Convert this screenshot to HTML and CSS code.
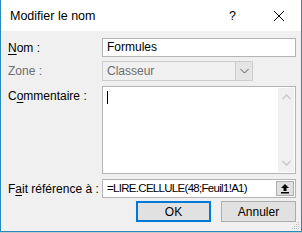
FILE: index.html
```html
<!DOCTYPE html>
<html lang="fr">
<head>
    <meta charset="UTF-8">
    <title>Modifier le nom</title>
    <link rel="stylesheet" href="styles.css">
</head>
<body>
    <div class="dialog">
        <div class="title-bar">
            <span class="title-text">Modifier le nom</span>
            <span class="title-help">?</span>
            <svg class="title-close" width="12" height="12" viewBox="0 0 12 12">
                <path d="M1 1 L11 11 M11 1 L1 11" stroke="#000" stroke-width="1" fill="none"/>
            </svg>
        </div>

        <div class="dialog-body">
            <div class="form-row row-name">
                <label class="form-label"><u>N</u>om :</label>
                <div class="text-field">Formules</div>
            </div>

            <div class="form-row row-zone">
                <label class="form-label disabled">Zone :</label>
                <div class="select-field">
                    <span class="select-value">Classeur</span>
                    <span class="select-button">
                        <svg width="9" height="6" viewBox="0 0 9 6">
                            <path d="M0.5 1 L4.5 5 L8.5 1" stroke="#555" stroke-width="1" fill="none"/>
                        </svg>
                    </span>
                </div>
            </div>

            <div class="form-row row-comment">
                <label class="form-label">C<u>o</u>mmentaire :</label>
                <div class="text-area">
                    <span class="caret"></span>
                    <div class="scrollbar">
                        <svg width="9" height="6" viewBox="0 0 9 6">
                            <path d="M0.5 5 L4.5 1 L8.5 5" stroke="#c8c8c8" stroke-width="1.5" fill="none"/>
                        </svg>
                        <svg width="9" height="6" viewBox="0 0 9 6">
                            <path d="M0.5 1 L4.5 5 L8.5 1" stroke="#c8c8c8" stroke-width="1.5" fill="none"/>
                        </svg>
                    </div>
                </div>
            </div>

            <div class="form-row row-ref">
                <label class="form-label">F<u>a</u>it référence à :</label>
                <div class="text-field ref-field">
                    <span class="ref-value">=LIRE.CELLULE(48;Feuil1!A1)</span>
                    <span class="collapse-button">
                        <svg width="10" height="11" viewBox="0 0 10 11">
                            <path d="M5 1 L9 5 L6.5 5 L6.5 8 L3.5 8 L3.5 5 L1 5 Z" fill="#000"/>
                            <rect x="1" y="9" width="8" height="1.5" fill="#000"/>
                        </svg>
                    </span>
                </div>
            </div>

            <div class="button-row">
                <button class="dialog-button default">OK</button>
                <button class="dialog-button">Annuler</button>
            </div>
        </div>

        <svg class="grip" width="8" height="8" viewBox="0 0 8 8">
            <rect x="6" y="0" width="1" height="1" fill="#b8b8b8"/>
            <rect x="4" y="2" width="1" height="1" fill="#b8b8b8"/>
            <rect x="6" y="2" width="1" height="1" fill="#b8b8b8"/>
            <rect x="2" y="4" width="1" height="1" fill="#b8b8b8"/>
            <rect x="4" y="4" width="1" height="1" fill="#b8b8b8"/>
            <rect x="6" y="4" width="1" height="1" fill="#b8b8b8"/>
            <rect x="0" y="6" width="1" height="1" fill="#b8b8b8"/>
            <rect x="2" y="6" width="1" height="1" fill="#b8b8b8"/>
            <rect x="4" y="6" width="1" height="1" fill="#b8b8b8"/>
            <rect x="6" y="6" width="1" height="1" fill="#b8b8b8"/>
        </svg>
    </div>
</body>
</html>
```

FILE: styles.css
```css
body, html {
    margin: 0;
    padding: 0;
    background: #c8c8c8;
    font-family: "Liberation Sans", Arial, sans-serif;
    font-size: 12px;
    color: #000;
}
.dialog {
    position: relative;
    width: 300px;
    height: 231px;
    background: #f0f0f0;
    border: 1px solid #2b88ba;
    border-top: none;
}
.title-bar {
    height: 31px;
    background: #fff;
    display: flex;
    align-items: center;
}
.title-text {
    margin-left: 9px;
    font-size: 12.5px;
    flex: 1;
}
.title-help {
    font-size: 12.5px;
    margin-right: 37px;
}
.title-close {
    margin-right: 16px;
}
.dialog-body {
    padding: 7px 0 0 7px;
}
.form-row {
    display: flex;
    align-items: flex-start;
}
.form-label {
    width: 94px;
    flex: none;
    line-height: 16px;
    padding-top: 2px;
}
.form-label u {
    text-decoration-thickness: 1px;
    text-underline-offset: 2px;
}
.form-label.disabled {
    color: #6d6d6d;
}
.row-name {
    height: 19px;
}
.row-zone {
    height: 20px;
    margin-top: 4px;
}
.row-comment {
    height: 88px;
    margin-top: 5px;
}
.row-ref {
    height: 19px;
    margin-top: 5px;
}
.text-field {
    box-sizing: border-box;
    width: 194px;
    height: 100%;
    background: #fff;
    border: 1px solid #b4b4b4;
    padding: 0 4px;
    line-height: 17px;
}
.select-field {
    box-sizing: border-box;
    width: 151px;
    height: 100%;
    border: 1px solid #cccccc;
    display: flex;
    background: #f0f0f0;
}
.select-value {
    flex: 1;
    color: #6d6d6d;
    padding-left: 4px;
    line-height: 18px;
}
.select-button {
    width: 16px;
    background: #e5e5e5;
    border-left: 1px solid #cccccc;
    display: flex;
    align-items: center;
    justify-content: center;
}
.text-area {
    box-sizing: border-box;
    width: 194px;
    height: 100%;
    background: #fff;
    border: 1px solid #b4b4b4;
    display: flex;
    justify-content: space-between;
}
.caret {
    width: 1px;
    height: 13px;
    background: #000;
    margin: 4px 0 0 4px;
}
.scrollbar {
    width: 16px;
    margin: 1px 1px 1px 0;
    background: #f0f0f0;
    display: flex;
    flex-direction: column;
    justify-content: space-between;
    align-items: center;
    padding: 6px 0;
}
.ref-field {
    display: flex;
    justify-content: space-between;
    align-items: center;
    padding-right: 1px;
}
.ref-value {
    font-size: 11.5px;
    letter-spacing: -0.7px;
}
.collapse-button {
    box-sizing: border-box;
    width: 18px;
    height: 15px;
    background: #e1e1e1;
    border: 1px solid #adadad;
    display: flex;
    align-items: center;
    justify-content: center;
}
.button-row {
    display: flex;
    gap: 10px;
    margin: 3px 0 0 128px;
}
.dialog-button {
    box-sizing: border-box;
    width: 75px;
    height: 21px;
    background: #e1e1e1;
    border: 1px solid #adadad;
    font-family: inherit;
    font-size: 12px;
    color: #000;
    padding: 0;
}
.dialog-button.default {
    border: 2px solid #0078d7;
}
.grip {
    position: absolute;
    right: 1px;
    bottom: 1px;
}
```
